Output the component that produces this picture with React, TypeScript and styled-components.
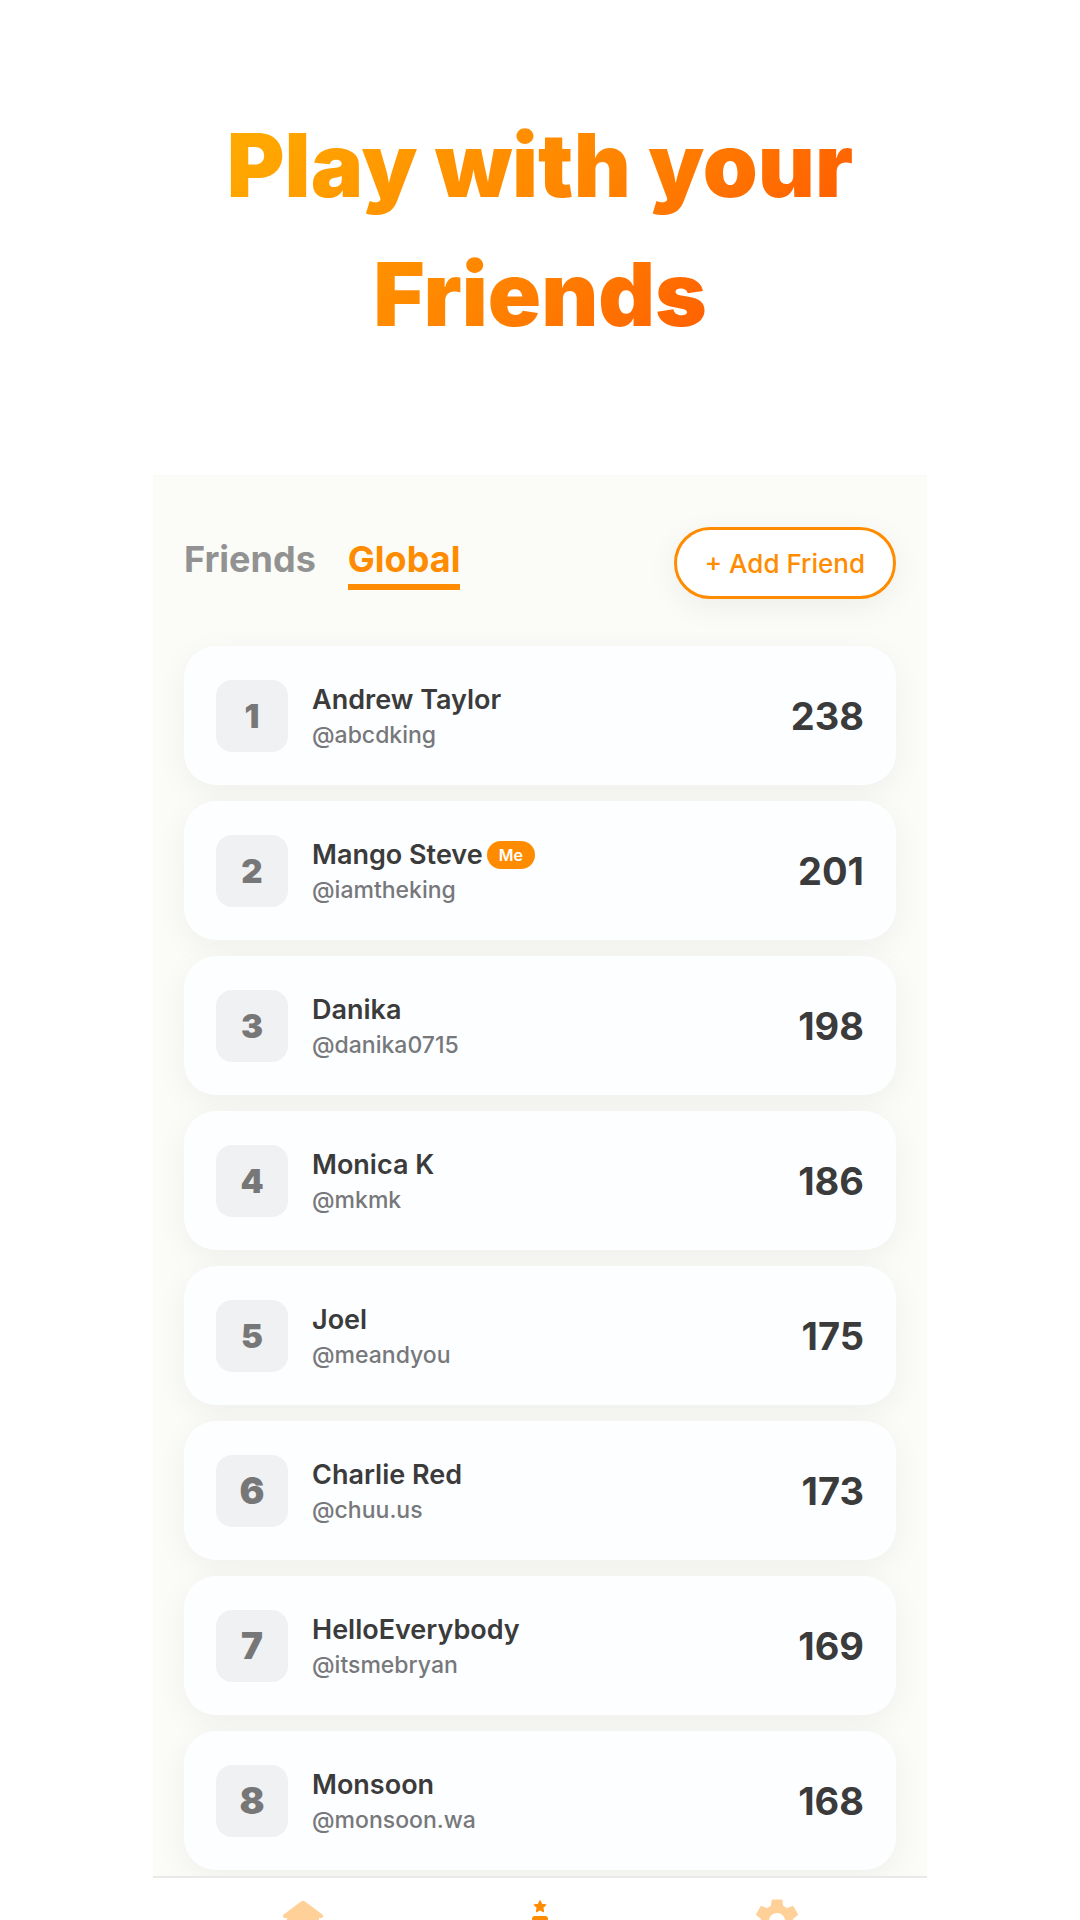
import React from "react";
import styled, { createGlobalStyle } from "styled-components";
import { MdSettings } from "react-icons/md";

const orange = "#ff8c00";

const GlobalStyle = createGlobalStyle`
  *, *::before, *::after { box-sizing: border-box; }
  body {
    margin: 0;
    background: #ffffff;
    font-family: Inter, "Liberation Sans", sans-serif;
  }
  button { font-family: inherit; cursor: pointer; }
`;

const Page = styled.main`
  display: flex;
  flex-direction: column;
  align-items: center;
  height: 100vh;
  overflow: hidden;
`;

const Title = styled.h1`
  flex: none;
  width: 60%;
  margin: 0;
  padding: 101px 0 116px;
  font-size: 88px;
  font-weight: 900;
  line-height: 129px;
  text-align: center;
  color: transparent;
  background: linear-gradient(135deg, #ffb800 0%, #ff8400 50%, #ff3800 100%);
  background-clip: text;
  -webkit-background-clip: text;
`;

const Panel = styled.section`
  flex: none;
  display: flex;
  flex-direction: column;
  width: calc(100% - 306px);
  background: #fbfcf7;
`;

const Header = styled.header`
  display: flex;
  align-items: center;
  justify-content: space-between;
  padding: 52px 31px 47px;
`;

const Tabs = styled.nav`
  display: flex;
  gap: 32px;
`;

const Tab = styled.button<{ $active?: boolean }>`
  padding: 0 0 2px;
  border: 0;
  border-bottom: 6px solid ${(p) => (p.$active ? orange : "transparent")};
  background: none;
  color: ${(p) => (p.$active ? orange : "#929292")};
  font-size: 36px;
  font-weight: 700;
  line-height: 45px;
`;

const AddButton = styled.button`
  height: 72px;
  padding: 0 28px;
  border: 3px solid ${orange};
  border-radius: 36px;
  background: #ffffff;
  box-shadow: 0 8px 32px rgba(0, 0, 0, 0.06);
  color: ${orange};
  font-size: 26px;
  font-weight: 500;
`;

const List = styled.ol`
  display: flex;
  flex-direction: column;
  gap: 16px;
  margin: 0;
  padding: 0 31px 6px;
  list-style: none;
`;

const Card = styled.li`
  display: flex;
  align-items: center;
  gap: 24px;
  height: 139px;
  padding: 0 32px;
  border-radius: 32px;
  background: #fdfeff;
  box-shadow: 0 8px 32px rgba(0, 0, 0, 0.05);
`;

const Rank = styled.span<{ $large: boolean }>`
  display: grid;
  place-items: center;
  width: 72px;
  height: 72px;
  border-radius: 16px;
  background: #f0f1f3;
  color: #777777;
  font-size: ${(p) => (p.$large ? 37 : 33)}px;
  font-weight: 900;
`;

const Person = styled.div`
  flex: 1;
  display: flex;
  flex-direction: column;
  padding-top: 2px;
`;

const NameRow = styled.div`
  display: flex;
  align-items: center;
  gap: 4px;
`;

const Name = styled.strong`
  color: #3b3b3b;
  font-size: 27px;
  font-weight: 600;
  line-height: 36px;
`;

const MeBadge = styled.span`
  padding: 0 12px;
  border-radius: 14px;
  background: ${orange};
  color: #ffffff;
  font-size: 16px;
  font-weight: 600;
  line-height: 28px;
`;

const Handle = styled.span`
  color: #77787b;
  font-size: 23px;
  font-weight: 500;
  line-height: 34px;
`;

const Score = styled.span`
  color: #3b3b3b;
  font-size: 38px;
  font-weight: 700;
`;

const BottomNav = styled.nav`
  display: flex;
  padding: 16px 31px;
  border-top: 2px solid #e9eae7;
  background: #ffffff;
`;

const NavButton = styled.button<{ $active?: boolean }>`
  flex: 1;
  display: flex;
  justify-content: center;
  padding: 0;
  border: 0;
  background: none;
  color: ${(p) => (p.$active ? orange : "#ffd199")};
`;

const players = [
  { name: "Andrew Taylor", handle: "@abcdking", score: 238 },
  { name: "Mango Steve", handle: "@iamtheking", score: 201, me: true },
  { name: "Danika", handle: "@danika0715", score: 198 },
  { name: "Monica K", handle: "@mkmk", score: 186 },
  { name: "Joel", handle: "@meandyou", score: 175 },
  { name: "Charlie Red", handle: "@chuu.us", score: 173 },
  { name: "HelloEverybody", handle: "@itsmebryan", score: 169 },
  { name: "Monsoon", handle: "@monsoon.wa", score: 168 },
];

function HomeIcon() {
  return (
    <svg width="54" height="54" viewBox="0 0 54 54" fill="currentColor" aria-hidden="true">
      <path d="M25 7.600Q27 6 29 7.600L46.400 20.600Q47.600 21.900 46.800 23.200Q46.300 24 45 24H43V44Q43 47 40 47H14Q11 47 11 44V24H9Q7.700 24 7.200 23.200Q6.400 21.900 7.600 20.600Z" />
    </svg>
  );
}

function PodiumIcon() {
  return (
    <svg width="54" height="54" viewBox="0 0 54 54" fill="currentColor" aria-hidden="true">
      <path
        d="M27 6.800L28.700 10.400L32.700 10.900L29.800 13.600L30.500 17.600L27 15.700L23.500 17.600L24.200 13.600L21.300 10.900L25.300 10.400Z"
        stroke="currentColor"
        strokeWidth="1.200"
        strokeLinejoin="round"
      />
      <path d="M22 22H32Q35 22 35 25V47H19V25Q19 22 22 22Z" />
      <path d="M4 34Q4 31 7 31H16V47H7Q4 47 4 44Z" />
      <path d="M38 36H47Q50 36 50 39V44Q50 47 47 47H38Z" />
    </svg>
  );
}

export default function App() {
  return (
    <>
      <GlobalStyle />
      <Page>
        <Title>Play with your Friends</Title>
        <Panel>
          <Header>
            <Tabs aria-label="Leaderboards">
              <Tab type="button">Friends</Tab>
              <Tab type="button" $active aria-current="true">Global</Tab>
            </Tabs>
            <AddButton type="button">+ Add Friend</AddButton>
          </Header>
          <List>
            {players.map((player, index) => (
              <Card key={player.handle}>
                <Rank $large={index >= 5}>{index + 1}</Rank>
                <Person>
                  <NameRow>
                    <Name>{player.name}</Name>
                    {player.me && <MeBadge>Me</MeBadge>}
                  </NameRow>
                  <Handle>{player.handle}</Handle>
                </Person>
                <Score>{player.score}</Score>
              </Card>
            ))}
          </List>
          <BottomNav aria-label="Main">
            <NavButton type="button" aria-label="Home">
              <HomeIcon />
            </NavButton>
            <NavButton type="button" $active aria-label="Ranking">
              <PodiumIcon />
            </NavButton>
            <NavButton type="button" aria-label="Settings">
              <MdSettings size={54} />
            </NavButton>
          </BottomNav>
        </Panel>
      </Page>
    </>
  );
}
